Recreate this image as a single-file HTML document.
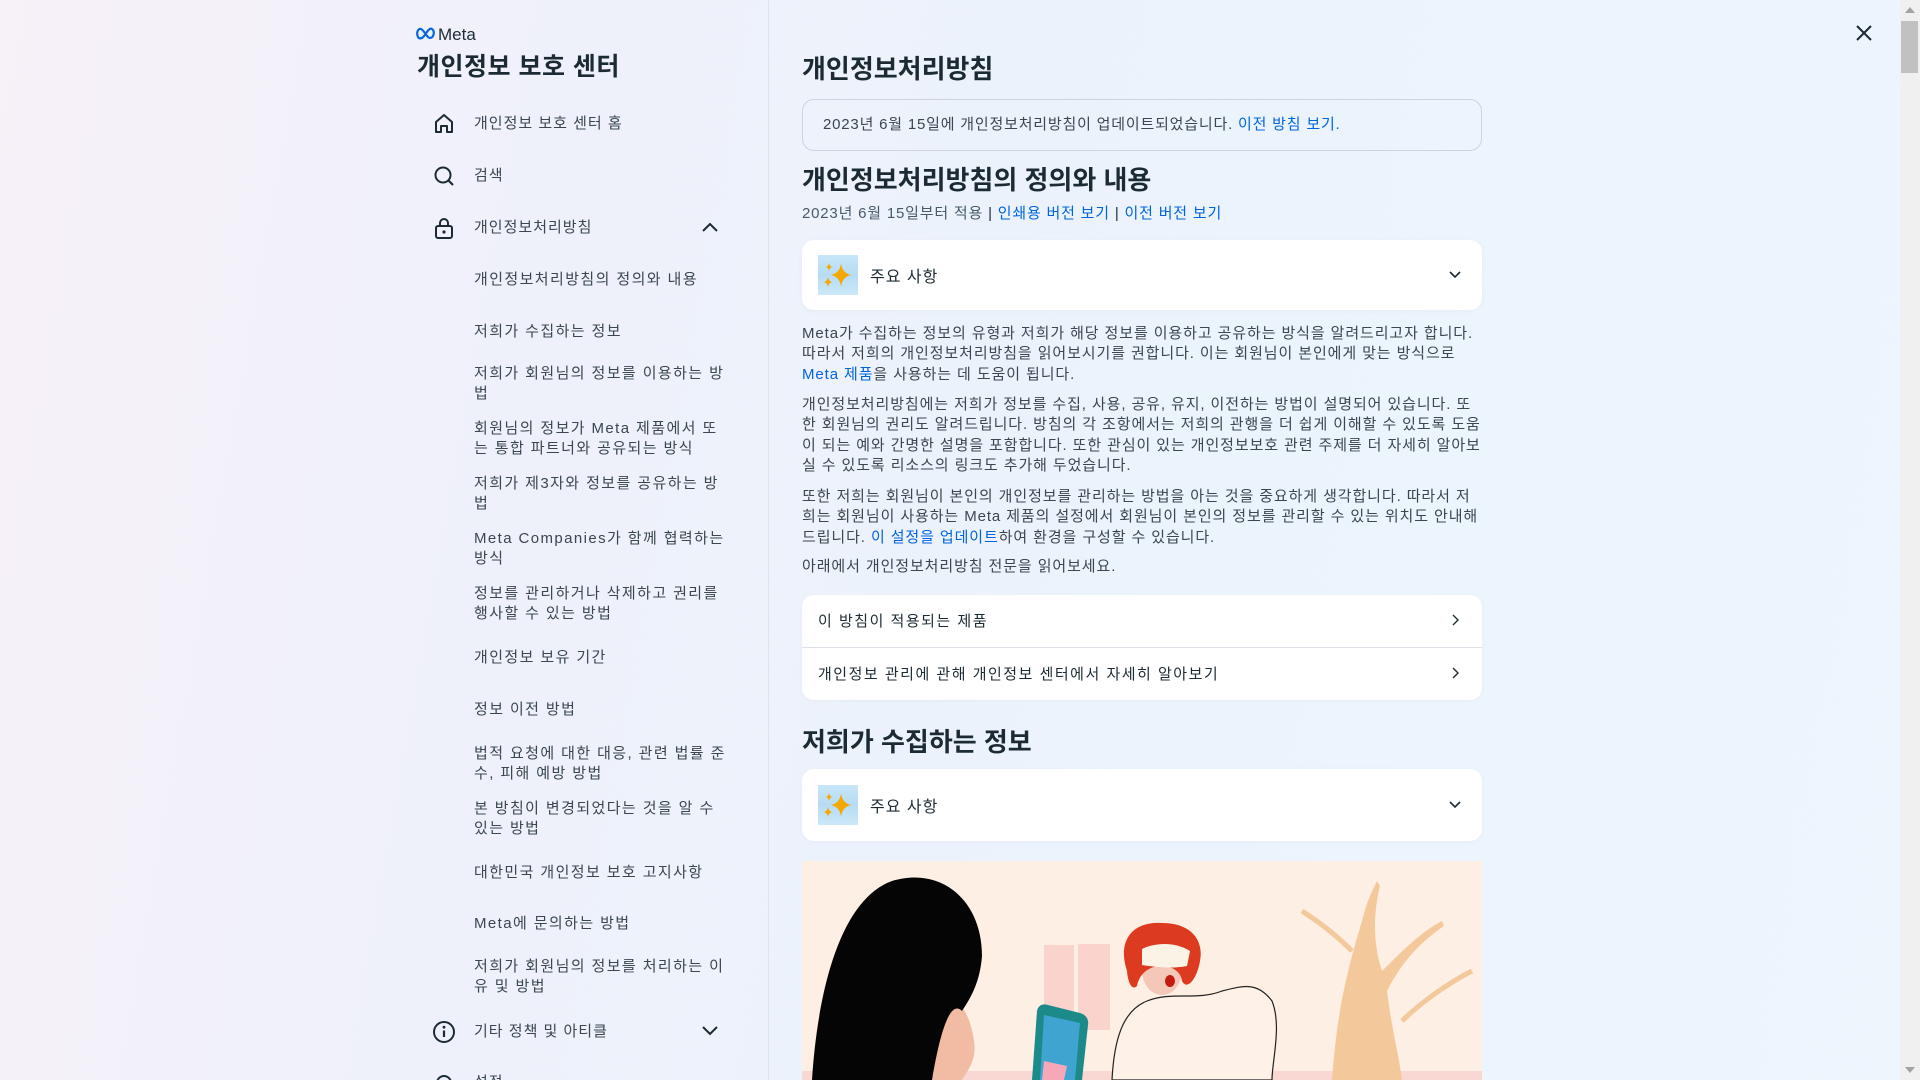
<!DOCTYPE html>
<html><head><meta charset="utf-8">
<style>
*{margin:0;padding:0;box-sizing:border-box}
html,body{width:1920px;height:1080px;overflow:hidden}
body{font-family:"Liberation Sans","Noto Sans CJK KR",sans-serif;color:#1c2b33;background:linear-gradient(100deg,#f7f1f8 0%,#eef1fa 30%,#ebf3fd 60%,#edf5fd 100%);position:relative}
.a{position:absolute;white-space:nowrap}
.side{position:absolute;left:0;top:0;width:769px;height:1080px;border-right:1px solid #dfe3ec}
.nav{position:absolute;left:474px;font-size:15px;color:#3a4650;line-height:20px;letter-spacing:1px}
.sub{position:absolute;left:474px;width:252px;font-size:15px;color:#3a4650;line-height:20px;white-space:normal;letter-spacing:1.4px}
.ic{position:absolute;left:432px;width:24px;height:24px}
.h1{font-size:26px;font-weight:bold;color:#1c2b33}
.p{position:absolute;left:802px;width:682px;font-size:15px;line-height:20.4px;color:#3a4650;letter-spacing:0.9px}
.lk{color:#0064e0}
.card{position:absolute;left:802px;width:680px;background:#fff;border-radius:12px;box-shadow:0 1px 6px rgba(0,0,0,0.03)}
.spark{position:absolute;left:16px;width:40px;height:40px;background:linear-gradient(180deg,#c8e6f8,#b6dcf4 50%,#cbe8f8)}
.chev{position:absolute;right:20px;width:14px;height:14px}
</style></head><body>
<div class="side"></div>
<svg class="a" style="left:416px;top:27px" width="20" height="13" viewBox="0 0 20 13"><path d="M2 10 C0 6 2 1 5 2 C8 3 11 11 14 11 C18 11 19 4 16 2 C13 0 10 7 8 9 C6 12 3 12 2 10Z" fill="none" stroke="#0668e1" stroke-width="2.2"/></svg>
<div class="a" style="left:438px;top:25px;font-size:17px;color:#1c2b33">Meta</div>
<div class="a" style="left:417px;top:47px;font-size:25px;font-weight:bold;color:#1c2b33;letter-spacing:0.5px">개인정보 보호 센터</div>

<svg class="ic" style="top:112px" viewBox="0 0 24 24"><path d="M4 20V10L12 3L20 10V20H15V14H9V20Z" fill="none" stroke="#1c2b33" stroke-width="2" stroke-linejoin="round"/></svg>
<div class="nav" style="top:114px">개인정보 보호 센터 홈</div>
<svg class="ic" style="top:164px" viewBox="0 0 24 24"><circle cx="11" cy="11" r="7.5" fill="none" stroke="#1c2b33" stroke-width="2"/><path d="M16.5 16.5L21 21" stroke="#1c2b33" stroke-width="2.2"/></svg>
<div class="nav" style="top:166px">검색</div>
<svg class="ic" style="top:216px" viewBox="0 0 24 24"><rect x="4" y="10" width="16" height="12" rx="2" fill="none" stroke="#1c2b33" stroke-width="2"/><path d="M8 10V7a4 4 0 0 1 8 0v3" fill="none" stroke="#1c2b33" stroke-width="2"/><circle cx="12" cy="16" r="1.6" fill="#1c2b33"/></svg>
<div class="nav" style="top:218px">개인정보처리방침</div>
<svg class="a" style="left:701px;top:221px" width="18" height="12" viewBox="0 0 18 12"><path d="M2 10L9 3L16 10" fill="none" stroke="#1c2b33" stroke-width="2"/></svg>

<div class="sub" style="top:270px">개인정보처리방침의 정의와 내용</div>
<div class="sub" style="top:322px">저희가 수집하는 정보</div>
<div class="sub" style="top:364px">저희가 회원님의 정보를 이용하는 방법</div>
<div class="sub" style="top:419px">회원님의 정보가 Meta 제품에서 또는 통합 파트너와 공유되는 방식</div>
<div class="sub" style="top:474px">저희가 제3자와 정보를 공유하는 방법</div>
<div class="sub" style="top:529px">Meta Companies가 함께 협력하는 방식</div>
<div class="sub" style="top:584px">정보를 관리하거나 삭제하고 권리를 행사할 수 있는 방법</div>
<div class="sub" style="top:648px">개인정보 보유 기간</div>
<div class="sub" style="top:700px">정보 이전 방법</div>
<div class="sub" style="top:744px">법적 요청에 대한 대응, 관련 법률 준수, 피해 예방 방법</div>
<div class="sub" style="top:799px">본 방침이 변경되었다는 것을 알 수 있는 방법</div>
<div class="sub" style="top:863px">대한민국 개인정보 보호 고지사항</div>
<div class="sub" style="top:914px">Meta에 문의하는 방법</div>
<div class="sub" style="top:957px">저희가 회원님의 정보를 처리하는 이유 및 방법</div>

<svg class="ic" style="top:1020px" viewBox="0 0 24 24"><circle cx="12" cy="12" r="10" fill="none" stroke="#1c2b33" stroke-width="2"/><path d="M12 10.5V17" stroke="#1c2b33" stroke-width="2.2"/><circle cx="12" cy="7.2" r="1.4" fill="#1c2b33"/></svg>
<div class="nav" style="top:1022px">기타 정책 및 아티클</div>
<svg class="a" style="left:701px;top:1025px" width="18" height="12" viewBox="0 0 18 12"><path d="M2 2L9 9L16 2" fill="none" stroke="#1c2b33" stroke-width="2"/></svg>
<svg class="ic" style="top:1071px" viewBox="0 0 24 24"><circle cx="12" cy="12" r="7" fill="none" stroke="#1c2b33" stroke-width="2"/></svg>
<div class="nav" style="top:1073px">설정</div>

<svg class="a" style="left:1855px;top:24px" width="18" height="18" viewBox="0 0 18 18"><path d="M2 2L16 16M16 2L2 16" stroke="#1c2b33" stroke-width="2"/></svg>
<div class="a" style="left:1900px;top:0;width:20px;height:1080px;background:#f0f0f0"></div>
<div class="a" style="left:1901px;top:21px;width:17px;height:52px;background:#c1c1c1"></div>
<svg class="a" style="left:1905px;top:7px" width="10" height="6"><path d="M0 6L5 0L10 6Z" fill="#a3a3a3"/></svg>
<svg class="a" style="left:1905px;top:1067px" width="10" height="6"><path d="M0 0L5 6L10 0Z" fill="#a3a3a3"/></svg>

<div class="a h1" style="left:802px;top:49px">개인정보처리방침</div>
<div class="a" style="left:802px;top:99px;width:680px;height:52px;border:1px solid #cdd3df;border-radius:12px"></div>
<div class="a" style="left:823px;top:113px;font-size:15px;color:#3a4650;letter-spacing:0.8px">2023년 6월 15일에 개인정보처리방침이 업데이트되었습니다. <span class="lk">이전 방침 보기.</span></div>
<div class="a h1" style="left:802px;top:160px">개인정보처리방침의 정의와 내용</div>
<div class="a" style="left:802px;top:202px;font-size:15px;color:#465a69;letter-spacing:0.8px">2023년 6월 15일부터 적용 <span style="color:#1c2b33">|</span> <span class="lk">인쇄용 버전 보기</span> <span style="color:#1c2b33">|</span> <span class="lk">이전 버전 보기</span></div>

<div class="card" style="top:240px;height:70px">
<div class="spark" style="top:15px"><svg width="40" height="40" viewBox="0 0 40 40"><path d="M23 8Q24 18 33 20Q24 22 23 32Q22 22 13 20Q22 18 23 8Z" fill="#f5a800"/><path d="M11 8Q11.5 11 14 12Q11.5 13 11 16Q10.5 13 8 12Q10.5 11 11 8Z" fill="#f5a800"/><path d="M10 22Q10.7 26 14 27Q10.7 28 10 32Q9.3 28 6 27Q9.3 26 10 22Z" fill="#f5a800"/></svg></div>
<div class="a" style="left:68px;top:23px;font-size:16px;color:#1c2b33;letter-spacing:1px">주요 사항</div>
<svg class="chev" style="top:28px" viewBox="0 0 14 14"><path d="M2 4L7 9L12 4" fill="none" stroke="#1c2b33" stroke-width="1.6"/></svg>
</div>

<div class="p" style="top:324px">Meta가 수집하는 정보의 유형과 저희가 해당 정보를 이용하고 공유하는 방식을 알려드리고자 합니다. 따라서 저희의 개인정보처리방침을 읽어보시기를 권합니다. 이는 회원님이 본인에게 맞는 방식으로 <span class="lk">Meta 제품</span>을 사용하는 데 도움이 됩니다.</div>
<div class="p" style="top:395px">개인정보처리방침에는 저희가 정보를 수집, 사용, 공유, 유지, 이전하는 방법이 설명되어 있습니다. 또한 회원님의 권리도 알려드립니다. 방침의 각 조항에서는 저희의 관행을 더 쉽게 이해할 수 있도록 도움이 되는 예와 간명한 설명을 포함합니다. 또한 관심이 있는 개인정보보호 관련 주제를 더 자세히 알아보실 수 있도록 리소스의 링크도 추가해 두었습니다.</div>
<div class="p" style="top:487px">또한 저희는 회원님이 본인의 개인정보를 관리하는 방법을 아는 것을 중요하게 생각합니다. 따라서 저희는 회원님이 사용하는 Meta 제품의 설정에서 회원님이 본인의 정보를 관리할 수 있는 위치도 안내해 드립니다. <span class="lk">이 설정을 업데이트</span>하여 환경을 구성할 수 있습니다.</div>
<div class="p" style="top:557px">아래에서 개인정보처리방침 전문을 읽어보세요.</div>

<div class="card" style="top:595px;height:105px">
<div class="a" style="left:16px;top:15px;font-size:15px;color:#1c2b33;letter-spacing:1.5px">이 방침이 적용되는 제품</div>
<svg class="chev" style="top:18px" viewBox="0 0 14 14"><path d="M5 2L10 7L5 12" fill="none" stroke="#1c2b33" stroke-width="1.4"/></svg>
<div class="a" style="left:0;top:52px;width:680px;height:1px;background:#dde1e8"></div>
<div class="a" style="left:16px;top:68px;font-size:15px;color:#1c2b33;letter-spacing:1.5px">개인정보 관리에 관해 개인정보 센터에서 자세히 알아보기</div>
<svg class="chev" style="top:71px" viewBox="0 0 14 14"><path d="M5 2L10 7L5 12" fill="none" stroke="#1c2b33" stroke-width="1.4"/></svg>
</div>

<div class="a h1" style="left:802px;top:722px">저희가 수집하는 정보</div>
<div class="card" style="top:769px;height:72px">
<div class="spark" style="top:16px"><svg width="40" height="40" viewBox="0 0 40 40"><path d="M23 8Q24 18 33 20Q24 22 23 32Q22 22 13 20Q22 18 23 8Z" fill="#f5a800"/><path d="M11 8Q11.5 11 14 12Q11.5 13 11 16Q10.5 13 8 12Q10.5 11 11 8Z" fill="#f5a800"/><path d="M10 22Q10.7 26 14 27Q10.7 28 10 32Q9.3 28 6 27Q9.3 26 10 22Z" fill="#f5a800"/></svg></div>
<div class="a" style="left:68px;top:24px;font-size:16px;color:#1c2b33;letter-spacing:1px">주요 사항</div>
<svg class="chev" style="top:29px" viewBox="0 0 14 14"><path d="M2 4L7 9L12 4" fill="none" stroke="#1c2b33" stroke-width="1.6"/></svg>
</div>

<svg class="a" style="left:802px;top:861px" width="680" height="219" viewBox="0 0 680 219">
<rect width="680" height="219" fill="#fdefe3"/>
<rect x="242" y="84" width="30" height="85" fill="#f9d3cc"/>
<rect x="276" y="83" width="32" height="86" fill="#f9d3cc"/>
<rect x="0" y="210" width="680" height="9" fill="#f9d8d4"/>
<path d="M530 219 C535 150 545 110 560 60 C565 40 570 30 575 20 L578 25 C572 50 570 80 580 110 C600 90 620 70 640 60 L642 65 C620 80 600 100 585 130 C590 170 598 200 600 219Z" fill="#f3c99b"/>
<path d="M550 90 C530 70 515 60 500 50" stroke="#f3c99b" stroke-width="5" fill="none"/>
<path d="M600 160 C620 140 650 120 670 110" stroke="#f3c99b" stroke-width="5" fill="none"/>
<path d="M310 219 C312 180 320 150 345 140 C370 130 395 140 420 130 C440 125 455 120 470 140 C480 165 470 200 470 219Z" fill="#fdf1e8" stroke="#222" stroke-width="1.2"/>
<ellipse cx="360" cy="110" rx="20" ry="24" fill="#f4c8b8"/>
<path d="M325 110 C315 80 330 60 360 62 C390 62 402 80 398 100 C395 118 385 130 380 120 C378 100 340 98 335 125 C330 130 326 122 325 110Z" fill="#dd3b1f"/>
<path d="M340 88 C352 82 372 80 388 90 L385 105 C370 108 352 106 340 104Z" fill="#fbf4e6"/>
<ellipse cx="368" cy="120" rx="5" ry="6" fill="#c41a10"/>
<path d="M155 140 C165 150 170 165 172 180 C175 200 165 210 160 219 L120 219 C130 190 140 160 155 140Z" fill="#f2bba3"/>
<path d="M10 219 C15 140 35 40 90 20 C140 5 180 40 180 95 C178 120 170 135 160 150 C150 140 140 160 130 219Z" fill="#050505"/>
<path d="M230 219 L235 150 C236 145 240 142 246 144 L278 152 C284 154 287 158 286 164 L280 219Z" fill="#1d8a8a"/>
<path d="M238 219 L242 154 L278 162 L273 219Z" fill="#3fa4d0"/>
<path d="M240 219 L242 200 L265 205 L262 219Z" fill="#f6a8b8"/>
</svg>
</body></html>
